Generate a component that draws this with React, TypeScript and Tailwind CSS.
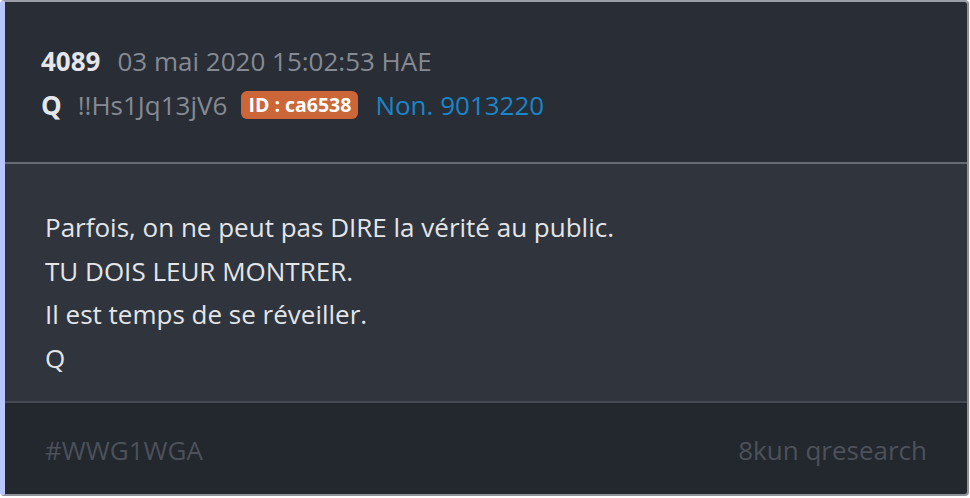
export default function App() {
  return (
    <div className="w-[970px] h-[498px] bg-white" style={{ fontFamily: '"Open Sans", sans-serif' }}>
      <div className="w-[969px] h-[496px] rounded-[4px] border-t-2 border-r-2 border-b-2 border-l-[5px] border-t-[#9a9ea6] border-r-[#8f939a] border-b-[#8f939a] border-l-[#b9c6fb] overflow-hidden flex flex-col">
        <div className="bg-[#292d35] h-[160px] pl-[36px] pt-[37px] text-[26px] leading-[44px]">
          <div className="flex items-center">
            <span className="font-bold text-[#e4e6ea]">4089</span>
            <span className="ml-[17px] text-[#858a93]">03 mai 2020 15:02:53 HAE</span>
          </div>
          <div className="flex items-center">
            <span className="font-bold text-[#e4e6ea]">Q</span>
            <span className="ml-[16px] text-[#858a93]">!!Hs1Jq13jV6</span>
            <span className="ml-[14px] bg-[#cc6639] text-white font-bold text-[19.5px] leading-[28px] px-[7px] rounded-[6px]">ID : ca6538</span>
            <span className="ml-[17px] text-[#1a86c8]">Non. 9013220</span>
          </div>
        </div>
        <div className="h-[2px] bg-[#666b73]" />
        <div className="bg-[#2f343d] h-[237px] pl-[40px] pt-[42px] text-[26px] leading-[43.5px] text-[#e3e5e9]">
          <div>Parfois, on ne peut pas DIRE la vérité au public.</div>
          <div>TU DOIS LEUR MONTRER.</div>
          <div>Il est temps de se réveiller.</div>
          <div>Q</div>
        </div>
        <div className="h-[2px] bg-[#454a52]" />
        <div className="bg-[#23272e] flex-1 flex items-center justify-between pl-[40px] pr-[40px] pt-[3px] text-[26px] text-[#4c515a]">
          <span>#WWG1WGA</span>
          <span>8kun qresearch</span>
        </div>
      </div>
    </div>
  );
}
